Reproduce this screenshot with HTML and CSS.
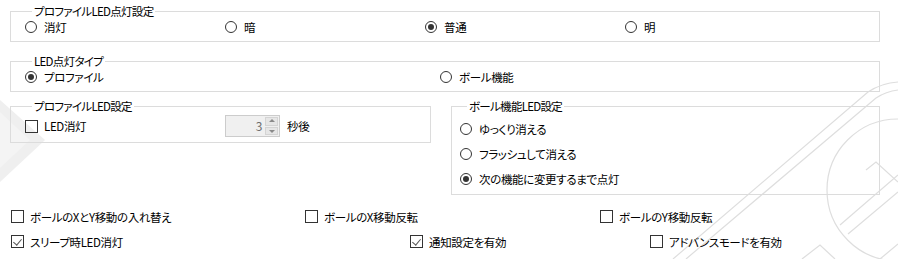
FILE: index.html
```html
<!DOCTYPE html>
<html lang="ja">
<head>
<meta charset="utf-8">
<link rel="stylesheet" href="styles.css">
</head>
<body>
<svg class="deco" width="898" height="259" viewBox="0 0 898 259">
  <polygon points="0,100 45,140 0,182" fill="#efefef"/>
  <polygon points="0,112 30,140 0,168" fill="#f4f4f4"/>
  <g fill="none" stroke="#dedede" stroke-width="1.2">
    <path d="M673,259 L868,92 A60,60 0 0 1 898,82"/>
    <path d="M686,259 L876,98 A50,50 0 0 1 898,90"/>
    <circle cx="898" cy="190" r="71"/>
    <path d="M866,170 L876,162 L898,182"/>
    <path d="M840,225 L898,175"/>
    <path d="M848,234 L898,192"/>
    <path d="M802,259 L820,245 L835,259"/>
    <path d="M880,259 L898,244"/>
  </g>
</svg>
<div class="page">
  <fieldset class="grp g1">
    <legend>プロファイルLED点灯設定</legend>
    <div class="opts">
      <label class="opt c200"><span class="radio"></span>消灯</label>
      <label class="opt c200"><span class="radio"></span>暗</label>
      <label class="opt c200"><span class="radio on"></span>普通</label>
      <label class="opt c200"><span class="radio"></span>明</label>
    </div>
  </fieldset>

  <fieldset class="grp g2">
    <legend>LED点灯タイプ</legend>
    <div class="opts">
      <label class="opt c415"><span class="radio on"></span>プロファイル</label>
      <label class="opt"><span class="radio"></span>ボール機能</label>
    </div>
  </fieldset>

  <div class="pair">
    <fieldset class="grp g3">
      <legend>プロファイルLED設定</legend>
      <div class="spinrow">
        <label class="opt c200"><span class="check"></span>LED消灯</label>
        <div class="spin">
          <span class="val">3</span>
          <span class="arrows">
            <span class="arr up"></span>
            <span class="arr down"></span>
          </span>
        </div>
        <span class="unit">秒後</span>
      </div>
    </fieldset>

    <fieldset class="grp g4">
      <legend>ボール機能LED設定</legend>
      <div class="stack">
        <label class="opt"><span class="radio"></span>ゆっくり消える</label>
        <label class="opt"><span class="radio"></span>フラッシュして消える</label>
        <label class="opt"><span class="radio on"></span>次の機能に変更するまで点灯</label>
      </div>
    </fieldset>
  </div>

  <div class="checks">
    <div class="crow">
      <label class="opt ck w294"><span class="check"></span>ボールのXとY移動の入れ替え</label>
      <label class="opt ck w295"><span class="check"></span>ボールのX移動反転</label>
      <label class="opt ck"><span class="check"></span>ボールのY移動反転</label>
    </div>
    <div class="crow">
      <label class="opt ck w399"><span class="check on"></span>スリープ時LED消灯</label>
      <label class="opt ck w240"><span class="check on"></span>通知設定を有効</label>
      <label class="opt ck"><span class="check"></span>アドバンスモードを有効</label>
    </div>
  </div>
</div>
</body>
</html>
```

FILE: styles.css
```css
* { box-sizing: border-box; }
html, body {
  margin: 0;
  padding: 0;
  background: #ffffff;
}
body {
  width: 898px;
  height: 259px;
  overflow: hidden;
  position: relative;
  font-family: "Noto Sans CJK JP", "Noto Sans", sans-serif;
  font-size: 11.5px;
  font-weight: 400;
  letter-spacing: -0.35px;
  font-feature-settings: "palt";
  color: #000;
}
.deco {
  position: absolute;
  left: 0;
  top: 0;
  z-index: 0;
}
.page {
  position: relative;
  z-index: 1;
  padding-left: 10px;
  width: 880px;
}
.grp {
  margin: 0;
  padding: 0;
  border: 1px solid #dcdcdc;
  min-width: 0;
}
.grp legend {
  margin-left: 7px;
  padding: 0 2px;
  line-height: 14px;
  height: 14px;
  letter-spacing: -0.7px;
}
.g1 {
  margin-top: 4px;
  width: 870px;
  padding: 0 0 5px 14px;
}
.g2 {
  margin-top: 12px;
  width: 870px;
  padding: 0 0 5px 14px;
}
.opts {
  display: flex;
  height: 18px;
  align-items: center;
}
.opt {
  display: flex;
  align-items: center;
  white-space: nowrap;
  line-height: 18px;
}
.c200 { width: 200px; flex: none; }
.c415 { width: 415px; flex: none; }

.radio {
  width: 12px;
  height: 12px;
  border: 1px solid #333;
  border-radius: 50%;
  margin-right: 7px;
  display: flex;
  align-items: center;
  justify-content: center;
  flex: none;
}
.radio.on::after {
  content: "";
  width: 6px;
  height: 6px;
  border-radius: 50%;
  background: #333;
}
.check {
  width: 13px;
  height: 13px;
  border: 1px solid #333;
  margin-right: 6px;
  flex: none;
  position: relative;
}
.check.on::after {
  content: "";
  position: absolute;
  left: 3px;
  top: 1px;
  width: 4px;
  height: 7px;
  border-right: 1px solid #555;
  border-bottom: 1px solid #555;
  transform: rotate(40deg);
}

.pair {
  display: flex;
  align-items: flex-start;
  gap: 20px;
  margin-top: 7px;
}
.g3 {
  width: 421px;
  padding: 2px 0 5px 14px;
}
.g4 {
  width: 429px;
  padding: 3px 0 3px 8px;
}
.spinrow {
  display: flex;
  align-items: center;
  height: 22px;
}
.spin {
  width: 55px;
  height: 22px;
  border: 1px solid #cccccc;
  background: #f0f0f0;
  display: flex;
  align-items: stretch;
  flex: none;
}
.spin .val {
  flex: 1;
  text-align: right;
  color: #6d6d6d;
  line-height: 20px;
  padding-right: 3px;
  font-size: 12px;
}
.arrows {
  width: 14px;
  display: flex;
  flex-direction: column;
  padding: 1px 1px 1px 0;
  gap: 1px;
}
.arr {
  flex: 1;
  background: #e6e6e6;
  border: 1px solid #d4d4d4;
  position: relative;
}
.arr::after {
  content: "";
  position: absolute;
  left: 50%;
  top: 50%;
  margin-left: -3px;
  border-left: 3px solid transparent;
  border-right: 3px solid transparent;
}
.arr.up::after {
  margin-top: -2px;
  border-bottom: 3px solid #8a8a8a;
}
.arr.down::after {
  margin-top: -1px;
  border-top: 3px solid #8a8a8a;
}
.unit {
  margin-left: 7px;
}
.stack {
  display: flex;
  flex-direction: column;
}
.stack .opt {
  height: 25px;
}

.checks {
  margin-top: 9px;
}
.crow {
  display: flex;
  height: 25px;
  align-items: center;
  padding-left: 1px;
}
.w294 { width: 294px; flex: none; }
.w295 { width: 295px; flex: none; }
.w399 { width: 399px; flex: none; }
.w240 { width: 240px; flex: none; }
```
